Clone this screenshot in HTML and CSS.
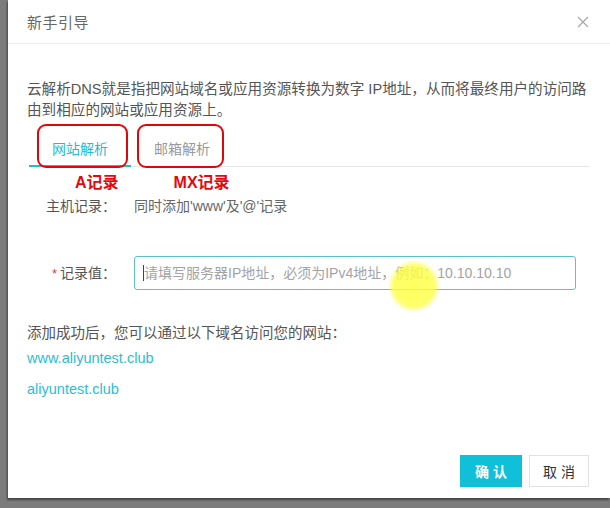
FILE: index.html
```html
<!DOCTYPE html>
<html lang="zh-CN">
<head>
<meta charset="utf-8">
<title>新手引导</title>
<link rel="stylesheet" href="styles.css">
</head>
<body>
<div class="page">
  <div class="modal">
    <div class="modal-header">
      <span class="modal-title">新手引导</span>
      <svg class="close" width="12" height="12" viewBox="0 0 12 12"><path d="M1 1L11 11M11 1L1 11" stroke="#a8a8a8" stroke-width="1.3" fill="none"/></svg>
    </div>
    <div class="modal-body">
      <p class="desc">云解析DNS就是指把网站域名或应用资源转换为数字 IP地址，从而将最终用户的访问路<br>由到相应的网站或应用资源上。</p>
      <div class="tabs">
        <div class="tab active">网站解析</div>
        <div class="tab">邮箱解析</div>
        <div class="mark mark-a"></div>
        <div class="mark mark-mx"></div>
      </div>
      <div class="notes">
        <span class="note note-a">A记录</span>
        <span class="note note-mx">MX记录</span>
      </div>
      <div class="row row-host">
        <span class="label">主机记录：</span>
        <span class="value">同时添加'www'及'@'记录</span>
      </div>
      <div class="row row-value">
        <span class="label"><span class="req">*</span>记录值：</span>
        <div class="input"><span class="caret"></span><span class="placeholder">请填写服务器IP地址，必须为IPv4地址，例如：10.10.10.10</span></div>
      </div>
      <p class="tip">添加成功后，您可以通过以下域名访问您的网站：</p>
      <a class="link link-1">www.aliyuntest.club</a>
      <a class="link link-2">aliyuntest.club</a>
    </div>
    <div class="modal-footer">
      <button class="btn btn-primary">确认</button>
      <button class="btn btn-default">取消</button>
    </div>
    <div class="pointer"></div>
  </div>
</div>
</body>
</html>
```
FILE: styles.css
```css
html, body {
  margin: 0;
  padding: 0;
}
body {
  background: #7c7c7c;
  height: 508px;
  overflow: hidden;
  font-family: "Liberation Sans", "Noto Sans CJK SC", sans-serif;
  color: #555;
}
.page {
  padding-left: 8px;
  height: 508px;
  box-sizing: border-box;
}
.modal {
  position: relative;
  background: #fff;
  height: 498px;
  display: flex;
  flex-direction: column;
  box-shadow: -1px 2px 2px rgba(0, 0, 0, 0.45);
}
.modal-header {
  height: 43px;
  border-bottom: 1px solid #ececec;
  display: flex;
  align-items: center;
  justify-content: space-between;
  padding: 0 21px 0 19px;
}
.modal-title {
  font-size: 15px;
  color: #666;
  letter-spacing: 0.5px;
}
.close {
  display: block;
}
.modal-body {
  padding: 35px 20px 0 19px;
  display: flex;
  flex-direction: column;
  align-items: flex-start;
}
.desc {
  margin: 0;
  font-size: 14.6px;
  line-height: 21px;
  color: #555;
  white-space: nowrap;
}
.tabs {
  position: relative;
  align-self: stretch;
  margin: 7px 0 0 2px;
  display: flex;
  border-bottom: 1px solid #e6e6e6;
}
.tab {
  font-size: 14px;
  line-height: 20px;
  padding: 11px 23px 6px;
  color: #999;
  border-bottom: 2px solid transparent;
  margin-bottom: -1px;
}
.tab.active {
  color: #1fbcd3;
  border-bottom-color: #1fbcd3;
}
.mark {
  position: absolute;
  top: -4px;
  height: 44px;
  border: 2.5px solid #e0060a;
  border-radius: 9px;
  box-sizing: border-box;
}
.mark-a {
  left: 8px;
  width: 91px;
}
.mark-mx {
  left: 108px;
  width: 87px;
}
.notes {
  margin-top: 6px;
  display: flex;
  font-size: 16px;
  line-height: 20px;
  font-weight: bold;
  color: #e3090d;
}
.note-a {
  margin-left: 48px;
}
.note-mx {
  margin-left: 55px;
}
.row {
  display: flex;
  align-items: center;
  font-size: 14px;
  line-height: 20px;
}
.label {
  width: 89px;
  text-align: right;
  margin-right: 18px;
  color: #555;
}
.row-host {
  margin-top: 3px;
}
.value {
  color: #666;
}
.row-value {
  margin-top: 40px;
}
.req {
  color: #e0403a;
  margin-right: 3px;
  font-size: 13px;
}
.input {
  width: 442px;
  height: 34px;
  box-sizing: border-box;
  border: 1px solid #5cc0cf;
  border-radius: 3px;
  display: flex;
  align-items: center;
  padding-left: 8px;
}
.caret {
  width: 1px;
  height: 16px;
  background: #444;
}
.placeholder {
  color: #a3a3a3;
  font-size: 14px;
}
.tip {
  margin: 33px 0 0;
  font-size: 14.5px;
  line-height: 20px;
  color: #555;
}
.link {
  font-size: 14.5px;
  line-height: 20px;
  color: #2cbdd4;
}
.link-1 {
  margin-top: 5px;
}
.link-2 {
  margin-top: 11px;
}
.modal-footer {
  margin-top: auto;
  display: flex;
  justify-content: flex-end;
  gap: 7px;
  padding: 0 21px 11px 0;
}
.btn {
  height: 32px;
  font-family: inherit;
  font-size: 14px;
  border-radius: 0;
  padding: 0;
  letter-spacing: 4px;
  text-indent: 4px;
}
.btn-primary {
  width: 62px;
  background: #10bfd8;
  border: 1px solid #10bfd8;
  color: #fff;
  font-weight: bold;
}
.btn-default {
  width: 60px;
  background: #fff;
  border: 1px solid #e2e2e2;
  color: #333;
}
.pointer {
  position: absolute;
  left: 380px;
  top: 260px;
  width: 52px;
  height: 52px;
  border-radius: 50%;
  background: radial-gradient(circle, rgba(255, 255, 70, 0.85) 0, rgba(255, 255, 70, 0.8) 55%, rgba(255, 255, 90, 0) 72%);
}
```
